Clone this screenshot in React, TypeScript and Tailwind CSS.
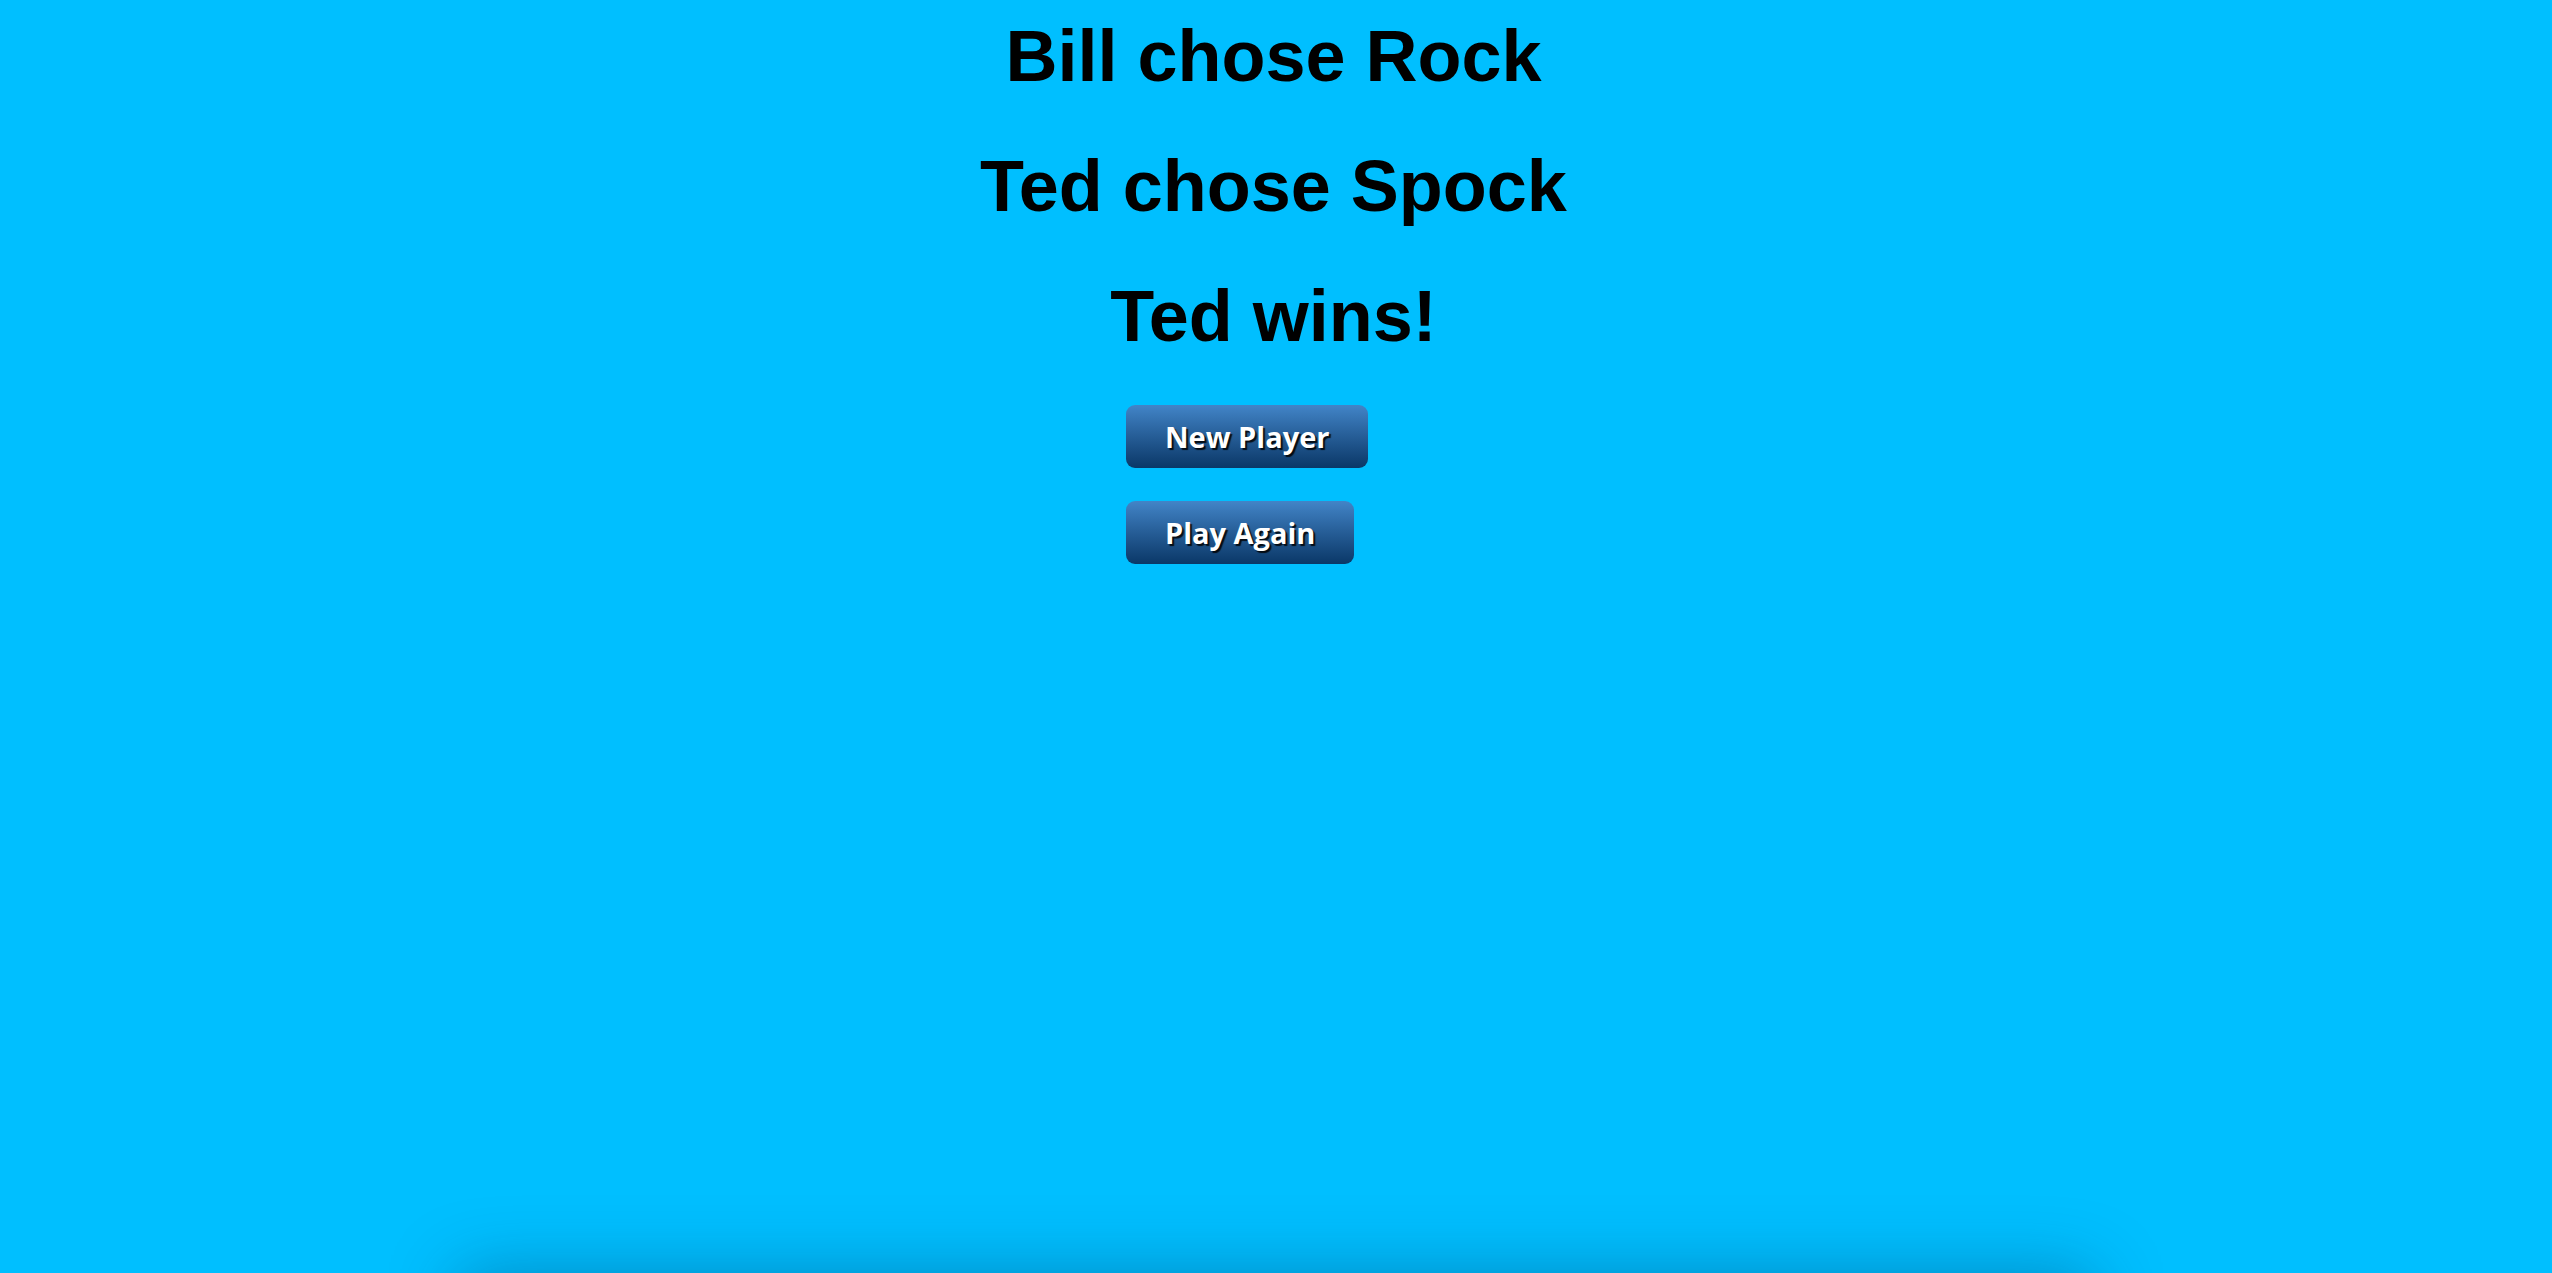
export default function App() {
	const buttons = ["New Player", "Play Again"];

	return (
		<div className="relative min-h-[1273px] w-full overflow-hidden bg-[#00bfff]">
			<main
				className="flex flex-col items-center pr-[5px] pt-[15px] text-black"
				style={{ fontFamily: '"Liberation Sans", Arial, sans-serif' }}
			>
				<h1 className="text-[72px] font-bold leading-[82px]">Bill chose Rock</h1>
				<h1 className="mt-[48px] text-[72px] font-bold leading-[82px]">Ted chose Spock</h1>
				<h1 className="mt-[48px] text-[72px] font-bold leading-[82px]">Ted wins!</h1>
			</main>

			<div className="mx-auto mt-[48px] flex w-[300px] flex-col items-start gap-[33px]">
				{buttons.map((label) => (
					<button
						key={label}
						className="h-[63px] rounded-[9px] bg-gradient-to-b from-[#4285c8] to-[#0a3868] px-[39px] text-[29px] font-bold text-white [text-shadow:2px_2px_1px_rgba(0,0,0,0.85)]"
						style={{ fontFamily: '"Open Sans", "Noto Sans", sans-serif' }}
					>
						{label}
					</button>
				))}
			</div>

			{/* panel sitting just below the fold, only its shadow shows */}
			<div className="absolute left-1/2 top-[1273px] h-[200px] w-[1633px] -translate-x-1/2 shadow-[0_0_70px_rgba(0,40,80,0.35)]" />
		</div>
	);
}
